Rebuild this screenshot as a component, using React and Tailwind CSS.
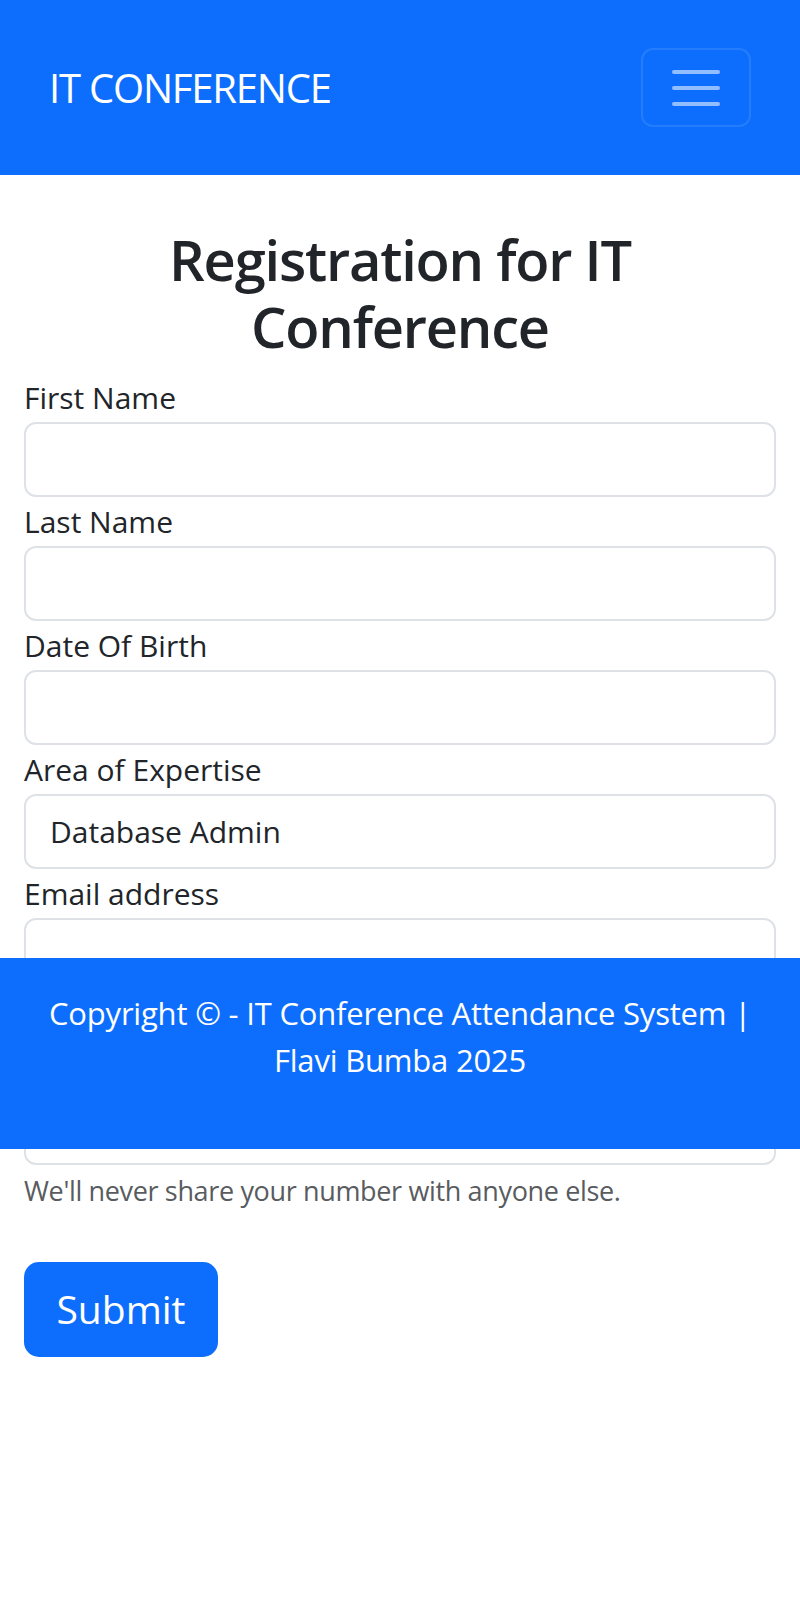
import React from "react";

function Field({ label, value, children }) {
  return (
    <div>
      <label className="block h-[49px] text-[30px] leading-[49px] text-[#212529]">{label}</label>
      <div className="flex h-[75px] items-center rounded-[12px] border-2 border-[#dee2e6] bg-white pl-[24px] text-[30px] text-[#212529]">
        {value}
      </div>
      {children}
    </div>
  );
}

export default function App() {
  return (
    <div className="relative min-h-[1598px] bg-white font-['Open_Sans',sans-serif] text-[#212529]">
      <nav className="flex h-[175px] items-center justify-between bg-[#0d6efd] pl-[49px] pr-[49px]">
        <span className="text-[40px] leading-[56px] tracking-[-1.2px] text-white">IT CONFERENCE</span>
        <button className="flex h-[79px] w-[110px] flex-col items-center justify-center gap-[12px] rounded-[12px] border-2 border-white/10">
          <span className="block h-[4px] w-[48px] rounded-full bg-white/55" />
          <span className="block h-[4px] w-[48px] rounded-full bg-white/55" />
          <span className="block h-[4px] w-[48px] rounded-full bg-white/55" />
        </button>
      </nav>

      <main className="px-[24px]">
        <h1 className="mb-[13px] mt-[51px] text-center text-[56px] font-semibold leading-[67px] tracking-[-1.2px] text-[#212529]">
          Registration for IT
          <br />
          Conference
        </h1>
        <form>
          <Field label="First Name" />
          <Field label="Last Name" />
          <Field label="Date Of Birth" />
          <Field label="Area of Expertise" value="Database Admin" />
          <Field label="Email address">
            <div className="h-[48px]" />
          </Field>
          <Field label="Phone Number">
            <p className="mt-[6px] text-[27px] leading-[40px] tracking-[-0.35px] text-[#595c5f]">
              We'll never share your number with anyone else.
            </p>
          </Field>
          <button
            type="button"
            className="mt-[51px] flex h-[95px] w-[194px] items-center justify-center rounded-[15px] bg-[#0d6efd] text-[39px] text-white"
          >
            Submit
          </button>
        </form>
      </main>

      <footer className="absolute left-0 right-0 top-[958px] h-[191px] bg-[#0d6efd] pt-[32px] text-center text-[31px] leading-[47px] tracking-[-0.2px] text-white">
        Copyright © - IT Conference Attendance System |
        <br />
        Flavi Bumba 2025
      </footer>
    </div>
  );
}
